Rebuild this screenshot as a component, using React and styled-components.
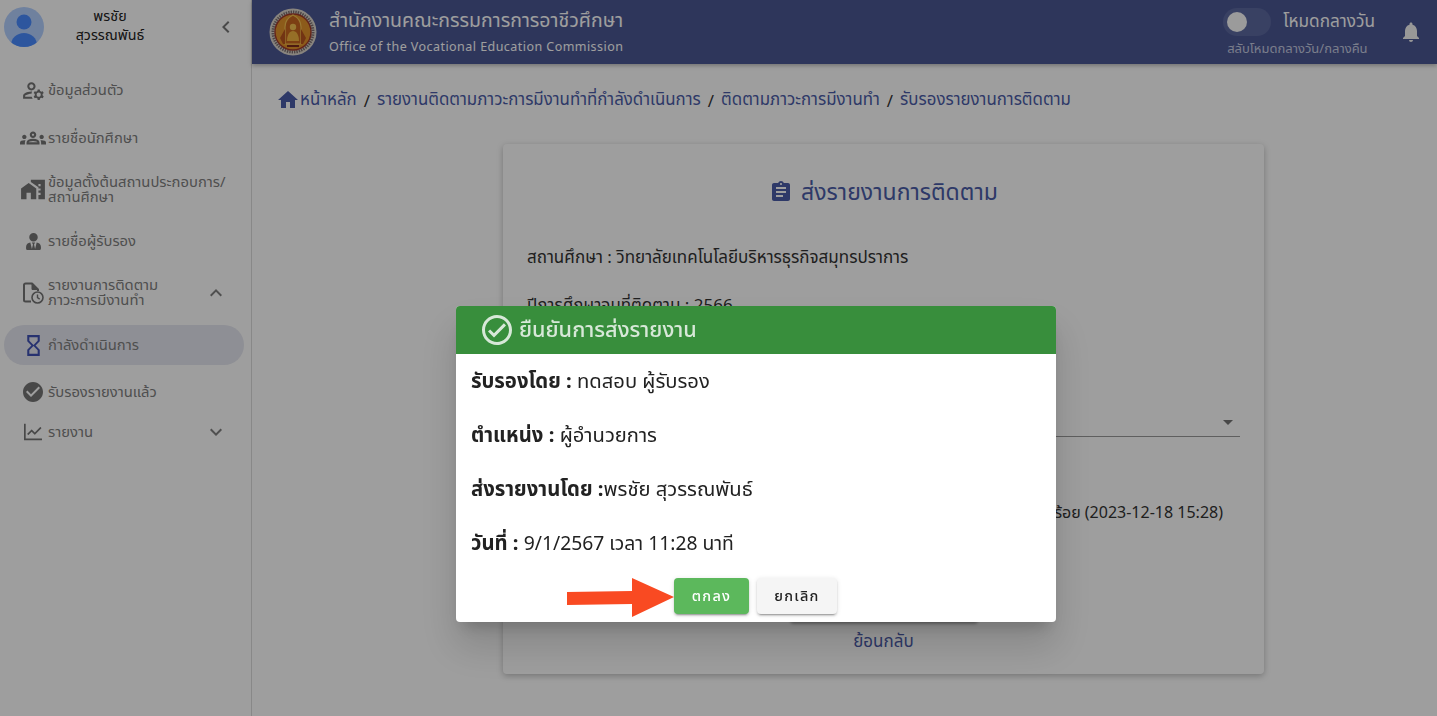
import React from 'react';
import styled, { createGlobalStyle } from 'styled-components';
import {
  MdChevronLeft,
  MdKeyboardArrowUp,
  MdKeyboardArrowDown,
  MdOutlineManageAccounts,
  MdOutlineGroups,
  MdHomeWork,
  MdHourglassEmpty,
  MdCheckCircle,
  MdOutlineCheckCircle,
  MdHome,
  MdAssignment,
  MdNotifications,
  MdArrowDropDown,
} from 'react-icons/md';
import { FaUserTie } from 'react-icons/fa';
import { AiOutlineLineChart } from 'react-icons/ai';

const FONT = '"Noto Sans", "Noto Sans Thai", "Open Sans", sans-serif';

const GlobalStyle = createGlobalStyle`
  html, body {
    margin: 0;
    height: 100%;
    overflow: hidden;
    background: #fff;
    font-family: ${FONT};
  }
  * { box-sizing: border-box; }
`;

const Page = styled.div`
  display: flex;
  height: 716px;
  background: #fff;
`;

const Sidebar = styled.aside`
  width: 252px;
  flex: none;
  background: #fff;
  border-right: 1px solid #dcdcdc;
  color: #808080;
`;

const Profile = styled.div`
  display: flex;
  align-items: center;
  height: 66px;
  padding: 0 13px 12px 4px;
`;

const ProfileName = styled.div`
  flex: 1;
  text-align: center;
  color: #222;
  font-size: 14.3px;
  line-height: 19px;
  padding-right: 38px;
  margin-top: -4px;
`;

const Menu = styled.nav`
  display: flex;
  flex-direction: column;
`;

const MenuRow = styled.div`
  display: flex;
  align-items: center;
  height: ${(p) => p.$h}px;
  margin: ${(p) => p.$mt || 0}px 7px 0 4px;
  padding: 0 16px 0 16px;
  border-radius: 20px;
  background: ${(p) => (p.$active ? '#e6e7f0' : 'transparent')};
`;

const MenuIcon = styled.span`
  display: flex;
  align-items: center;
  justify-content: center;
  width: 26px;
  height: 24px;
  margin-right: 2px;
  flex: none;
  color: ${(p) => p.$color || '#757575'};
  font-size: ${(p) => p.$size || 24}px;
`;

const MenuText = styled.span`
  flex: 1;
  font-size: 14.8px;
  line-height: 15px;
  white-space: nowrap;
  padding-bottom: 2px;
`;

const Main = styled.div`
  flex: 1;
  min-width: 0;
  display: flex;
  flex-direction: column;
`;

const Header = styled.header`
  display: flex;
  align-items: center;
  height: 64px;
  flex: none;
  padding: 0 14px 0 17px;
  background: #4b5794;
  color: #fff;
  box-shadow: 0 2px 4px rgba(0, 0, 0, 0.25);
`;

const Brand = styled.div`
  flex: 1;
  margin-left: 12px;
`;

const BrandTitle = styled.div`
  font-size: 19.5px;
  line-height: 28px;
  margin-top: -2px;
`;

const BrandSub = styled.div`
  font-size: 12.5px;
  line-height: 18px;
  letter-spacing: 0.45px;
  margin-top: 4px;
`;

const ModeBox = styled.div`
  display: flex;
  flex-direction: column;
  margin-right: 24px;
`;

const ModeRow = styled.div`
  display: flex;
  align-items: center;
  gap: 12px;
  font-size: 17.2px;
  margin-left: -4px;
`;

const ToggleTrack = styled.div`
  display: flex;
  align-items: center;
  width: 48px;
  height: 28px;
  padding-left: 4px;
  border-radius: 14px;
  background: #5d69a0;
`;

const ToggleThumb = styled.div`
  width: 20px;
  height: 20px;
  border-radius: 50%;
  background: #fafafa;
`;

const ModeHint = styled.div`
  font-size: 13px;
  line-height: 16px;
  margin-top: 4px;
  color: #c6cbe0;
`;

const Content = styled.main`
  flex: 1;
  padding: 24px 26px;
`;

const Breadcrumb = styled.div`
  display: flex;
  align-items: center;
  height: 24px;
  font-size: 16.85px;
  color: #4b5ca8;

  svg {
    margin-left: -2px;
  }
`;

const Slash = styled.span`
  margin: 0 7px;
  color: #333;
`;

const Card = styled.section`
  width: 761px;
  height: 530px;
  margin: 32px 0 0 225px;
  padding: 28px 24px;
  border-radius: 4px;
  background: #fff;
  box-shadow: 0 2px 6px rgba(0, 0, 0, 0.25);
  color: #333;
  font-size: 16px;
`;

const CardTitle = styled.h2`
  display: flex;
  align-items: center;
  justify-content: center;
  gap: 8px;
  height: 40px;
  margin: 0 0 33px;
  font-size: 23px;
  font-weight: 400;
  color: #4b5ca8;
`;

const Info = styled.div`
  height: 48px;
  font-size: 17px;
  line-height: 24px;
`;

const SelectLine = styled.div`
  display: flex;
  justify-content: flex-end;
  align-items: center;
  height: 30px;
  margin-top: 66px;
  border-bottom: 1px solid #999;
  color: #757575;
  font-size: 24px;
`;

const Status = styled.div`
  margin-top: 63px;
  text-align: right;
  padding-right: 17px;
  line-height: 24px;
`;

const SubmitButton = styled.button`
  display: block;
  width: 188px;
  height: 36px;
  margin: 61px auto 0;
  border: 0;
  border-radius: 4px;
  background: #4b5794;
  color: #fff;
  font-family: inherit;
  font-size: 14px;
  box-shadow: 0 3px 3px rgba(0, 0, 0, 0.3);
`;

const BackLink = styled.div`
  margin-top: 8px;
  text-align: center;
  font-size: 17px;
  line-height: 24px;
  color: #4b5ca8;
`;

const Backdrop = styled.div`
  position: fixed;
  inset: 0;
  display: flex;
  justify-content: center;
  align-items: flex-start;
  padding: 306px 0 0 75px;
  background: rgba(0, 0, 0, 0.38);
`;

const Dialog = styled.div`
  width: 600px;
  height: 316px;
  border-radius: 4px;
  background: #fff;
  box-shadow: 0 11px 15px -7px rgba(0, 0, 0, 0.2), 0 24px 38px 3px rgba(0, 0, 0, 0.14);
  overflow: hidden;
`;

const DialogHead = styled.div`
  display: flex;
  align-items: center;
  gap: 4px;
  height: 48px;
  padding-left: 23px;
  background: #388e3c;
  color: rgba(255, 255, 255, 0.8);
  font-size: 21.7px;
  font-weight: 500;
`;

const DialogBody = styled.div`
  padding: 0 15px;
  color: #222;
  font-size: 20.2px;

  b {
    font-size: 20.3px;
  }
`;

const DialogLine = styled.div`
  height: 54px;
  line-height: 53px;
  white-space: nowrap;
`;

const DateText = styled.span`
  font-size: 19.3px;
`;

const Actions = styled.div`
  display: flex;
  justify-content: center;
  gap: 8px;
  margin-top: 8px;
  padding-right: 1px;
`;

const ConfirmWrap = styled.div`
  position: relative;
`;

const Arrow = styled.svg`
  position: absolute;
  right: 100%;
  top: 0;
  width: 107px;
  height: 39px;
`;

const Button = styled.button`
  height: 36px;
  width: ${(p) => p.$w}px;
  border: 0;
  border-radius: 4px;
  font-family: inherit;
  font-size: 14.5px;
  font-weight: 500;
  letter-spacing: 1.25px;
  color: ${(p) => (p.$primary ? '#fff' : '#222')};
  background: ${(p) => (p.$primary ? '#5cb85c' : '#f5f5f5')};
  box-shadow: 0 3px 1px -2px rgba(0, 0, 0, 0.2), 0 2px 2px rgba(0, 0, 0, 0.14), 0 1px 5px rgba(0, 0, 0, 0.12);
`;

const Avatar = () => (
  <svg width="40" height="40" viewBox="0 0 40 40" style={{ flex: 'none' }}>
    <defs>
      <clipPath id="avatar-clip">
        <circle cx="20" cy="20" r="20" />
      </clipPath>
    </defs>
    <g clipPath="url(#avatar-clip)">
      <rect width="40" height="40" fill="#b4d0ff" />
      <circle cx="20" cy="15" r="7.5" fill="#4a8cff" />
      <ellipse cx="20" cy="38" rx="13" ry="12" fill="#4a8cff" />
    </g>
  </svg>
);

const Emblem = () => (
  <svg width="48" height="48" viewBox="0 0 48 48" style={{ flex: 'none' }}>
    <circle cx="24" cy="24" r="23.5" fill="#dcd6cc" />
    <circle cx="24" cy="24" r="20" fill="none" stroke="#7c6f70" strokeWidth="3" strokeDasharray="1.4 1" />
    <circle cx="24" cy="24" r="18" fill="#e3932a" stroke="#a23a2a" strokeWidth="1.4" />
    <path d="M16 36V19c0-6 4-10 8-12 4 2 8 6 8 12v17z" fill="#c9661f" stroke="#f5c251" strokeWidth="1.2" />
    <circle cx="24" cy="19" r="3.2" fill="#f5c251" />
    <path d="M18 33c0-6 2.500-10 6-10s6 4 6 10z" fill="#f2b440" />
    <path d="M11 30l5-9v15h-2zM37 30l-5-9v15h2z" fill="#b8541f" />
    <rect x="18" y="37" width="12" height="2" fill="#7e2a1c" />
  </svg>
);

const DocClockIcon = () => (
  <svg width="24" height="24" viewBox="0 0 24 24" fill="none" stroke="currentColor">
    <path d="M10 20.500H4.500a1.500 1.500 0 0 1-1.500-1.500V4a1.500 1.500 0 0 1 1.500-1.500H11l6 6v1.500" strokeWidth="2" strokeLinejoin="round" />
    <path d="M11 3v5.500h6" fill="currentColor" strokeWidth="1" />
    <circle cx="16.500" cy="16.500" r="5.500" strokeWidth="1.600" />
    <path d="M16.500 13.500v3.200l2.200 1.400" strokeWidth="1.400" />
  </svg>
);

export default function App() {
  return (
    <>
      <GlobalStyle />
      <Page>
        <Sidebar>
          <Profile>
            <Avatar />
            <ProfileName>
              พรชัย
              <br />
              สุวรรณพันธ์
            </ProfileName>
            <MdChevronLeft size={24} color="#777" />
          </Profile>
          <Menu>
            <MenuRow $h={48}>
              <MenuIcon $size={25}><MdOutlineManageAccounts /></MenuIcon>
              <MenuText>ข้อมูลส่วนตัว</MenuText>
            </MenuRow>
            <MenuRow $h={48}>
              <MenuIcon $size={26}><MdOutlineGroups /></MenuIcon>
              <MenuText>รายชื่อนักศึกษา</MenuText>
            </MenuRow>
            <MenuRow $h={55}>
              <MenuIcon $size={27}><MdHomeWork /></MenuIcon>
              <MenuText>
                ข้อมูลตั้งต้นสถานประกอบการ/
                <br />
                สถานศึกษา
              </MenuText>
            </MenuRow>
            <MenuRow $h={48}>
              <MenuIcon $size={17}><FaUserTie /></MenuIcon>
              <MenuText>รายชื่อผู้รับรอง</MenuText>
            </MenuRow>
            <MenuRow $h={56}>
              <MenuIcon><DocClockIcon /></MenuIcon>
              <MenuText>
                รายงานการติดตาม
                <br />
                ภาวะการมีงานทำ
              </MenuText>
              <MdKeyboardArrowUp size={24} />
            </MenuRow>
            <MenuRow $h={40} $mt={4} $active>
              <MenuIcon $color="#3f51b5" $size={25}><MdHourglassEmpty /></MenuIcon>
              <MenuText>กำลังดำเนินการ</MenuText>
            </MenuRow>
            <MenuRow $h={40} $mt={7}>
              <MenuIcon><MdCheckCircle /></MenuIcon>
              <MenuText>รับรองรายงานแล้ว</MenuText>
            </MenuRow>
            <MenuRow $h={40}>
              <MenuIcon $size={24}><AiOutlineLineChart /></MenuIcon>
              <MenuText>รายงาน</MenuText>
              <MdKeyboardArrowDown size={24} />
            </MenuRow>
          </Menu>
        </Sidebar>
        <Main>
          <Header>
            <Emblem />
            <Brand>
              <BrandTitle>สำนักงานคณะกรรมการการอาชีวศึกษา</BrandTitle>
              <BrandSub>Office of the Vocational Education Commission</BrandSub>
            </Brand>
            <ModeBox>
              <ModeRow>
                <ToggleTrack>
                  <ToggleThumb />
                </ToggleTrack>
                โหมดกลางวัน
              </ModeRow>
              <ModeHint>สลับโหมดกลางวัน/กลางคืน</ModeHint>
            </ModeBox>
            <MdNotifications size={24} color="#f5f5f5" />
          </Header>
          <Content>
            <Breadcrumb>
              <MdHome size={24} />
              หน้าหลัก
              <Slash>/</Slash>
              รายงานติดตามภาวะการมีงานทำที่กำลังดำเนินการ
              <Slash>/</Slash>
              ติดตามภาวะการมีงานทำ
              <Slash>/</Slash>
              รับรองรายงานการติดตาม
            </Breadcrumb>
            <Card>
              <CardTitle>
                <MdAssignment size={24} />
                ส่งรายงานการติดตาม
              </CardTitle>
              <Info>สถานศึกษา : วิทยาลัยเทคโนโลยีบริหารธุรกิจสมุทรปราการ</Info>
              <Info>ปีการศึกษาจบที่ติดตาม : 2566</Info>
              <SelectLine>
                <MdArrowDropDown />
              </SelectLine>
              <Status>ส่งรายงานเรียบร้อย (2023-12-18 15:28)</Status>
              <SubmitButton>ส่งรายงาน</SubmitButton>
              <BackLink>ย้อนกลับ</BackLink>
            </Card>
          </Content>
        </Main>
      </Page>
      <Backdrop>
        <Dialog>
          <DialogHead>
            <MdOutlineCheckCircle size={36} />
            ยืนยันการส่งรายงาน
          </DialogHead>
          <DialogBody>
            <DialogLine><b>รับรองโดย :</b> ทดสอบ ผู้รับรอง</DialogLine>
            <DialogLine><b>ตำแหน่ง :</b> ผู้อำนวยการ</DialogLine>
            <DialogLine><b>ส่งรายงานโดย :</b>พรชัย สุวรรณพันธ์</DialogLine>
            <DialogLine><b>วันที่ :</b> <DateText>9/1/2567 เวลา 11:28 นาที</DateText></DialogLine>
            <Actions>
              <ConfirmWrap>
                <Arrow viewBox="0 0 107 39">
                  <path d="M0 14 L65 13 L65 0 L107 19 L65 39 L65 26 L0 27 Z" fill="#f94a22" />
                </Arrow>
                <Button $primary $w={75}>ตกลง</Button>
              </ConfirmWrap>
              <Button $w={80}>ยกเลิก</Button>
            </Actions>
          </DialogBody>
        </Dialog>
      </Backdrop>
    </>
  );
}
